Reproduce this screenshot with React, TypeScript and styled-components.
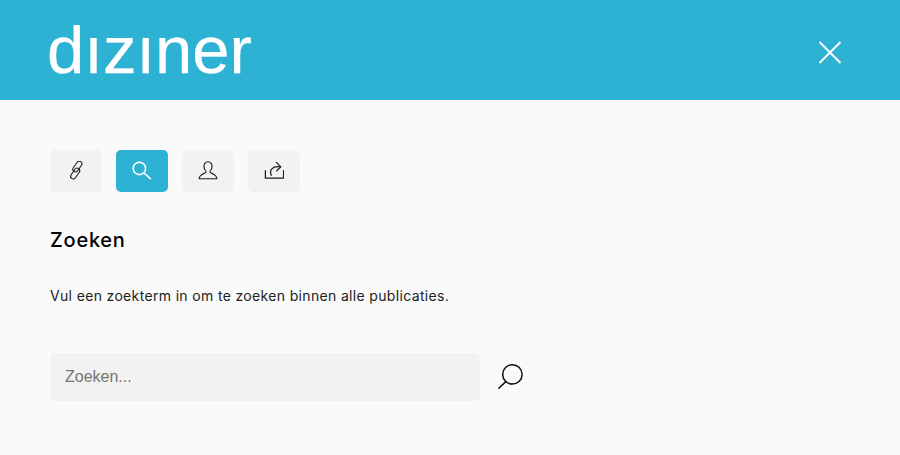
import { ReactNode } from 'react';
import styled, { createGlobalStyle } from 'styled-components';

const Global = createGlobalStyle`
    html, body {
        margin: 0;
        height: 100%;
        background: #fafafa;
    }
`;

const Page = styled.div`
    width: 900px;
    height: 455px;
    overflow: hidden;
    background: #fafafa;
    font-family: Inter, "Liberation Sans", sans-serif;
`;

const Header = styled.header`
    height: 100px;
    background: #2db2d3;
    display: flex;
    align-items: center;
    justify-content: space-between;
    padding: 0 58px 0 50px;
`;

const Logo = styled.div`
    font-family: "Liberation Sans", Arial, sans-serif;
    font-size: 67px;
    line-height: 100px;
    color: #fff;
    -webkit-text-stroke: 0.25px #fff;
    margin-left: -3px;
`;

const CloseButton = styled.button`
    width: 24px;
    height: 24px;
    padding: 0;
    margin-top: 6px;
    border: 0;
    background: none;
    display: block;
`;

const Main = styled.main`
    padding: 50px 50px 0;
`;

const Tabs = styled.nav`
    display: flex;
    gap: 14px;
`;

const Tab = styled.button<{ $active?: boolean }>`
    width: 52px;
    height: 42px;
    padding: 0;
    border: 0;
    border-radius: 5px;
    display: flex;
    align-items: center;
    justify-content: center;
    background: ${(p) => (p.$active ? '#2db2d3' : '#f2f2f2')};
    color: ${(p) => (p.$active ? '#fff' : '#1c1c1c')};
`;

const Title = styled.h2`
    margin: 36px 0 0;
    font-size: 20px;
    line-height: 24px;
    font-weight: 550;
    letter-spacing: 0.75px;
    color: #000;
`;

const Intro = styled.p`
    margin: 34px 0 0;
    font-size: 14px;
    line-height: 20px;
    letter-spacing: 0.34px;
    color: #222;
`;

const SearchRow = styled.form`
    display: flex;
    align-items: center;
    gap: 17px;
    margin-top: 47px;
`;

const SearchInput = styled.input`
    width: 430px;
    height: 48px;
    box-sizing: border-box;
    padding: 0 15px;
    border: 0;
    border-radius: 5px;
    background: #f2f2f2;
    font-family: "Liberation Sans", Arial, sans-serif;
    font-size: 16px;
    color: #222;
    outline: none;

    &::placeholder {
        color: #757575;
        opacity: 1;
    }
`;

const SearchButton = styled.button`
    width: 28px;
    height: 28px;
    padding: 0;
    border: 0;
    background: none;
    color: #111;
    display: block;
`;

function Icon(props: { size?: number; width?: number; children: ReactNode }) {
    const size = props.size ?? 20;
    return (
        <svg width={size} height={size} viewBox="0 0 20 20" fill="none" stroke="currentColor" strokeWidth={props.width ?? 1.1} strokeLinecap="round" strokeLinejoin="round">
            {props.children}
        </svg>
    );
}

export default function App() {
    return (
        <Page>
            <Global />
            <Header>
                <Logo>dızıner</Logo>
                <CloseButton aria-label="Sluiten">
                    <svg width="24" height="24" viewBox="0 0 24 24" fill="none" stroke="#fff" strokeWidth="1.9">
                        <path d="M1.5 1 L22.5 22 M22.5 1 L1.5 22" />
                    </svg>
                </CloseButton>
            </Header>
            <Main>
                <Tabs>
                    <Tab aria-label="Link">
                        <Icon>
                            <rect x="8.8" y="-0.5" width="5.2" height="12" rx="2.6" transform="rotate(35 11.4 5.5)" />
                            <rect x="6.6" y="6.5" width="5.2" height="12" rx="2.6" transform="rotate(35 9.2 12.5)" />
                        </Icon>
                    </Tab>
                    <Tab $active aria-label="Zoeken">
                        <Icon width={1.6}>
                            <circle cx="7.4" cy="7.4" r="6.2" />
                            <path d="M12 12 L18.4 17.6" />
                        </Icon>
                    </Tab>
                    <Tab aria-label="Profiel">
                        <Icon>
                            <path d="M10 0.8 C7.4 0.8 6 2.8 6 5.4 C6 7.8 7.1 9.2 7.8 10 C8.2 10.7 8 11.4 7.2 11.8 C5 12.8 2.4 13.8 1.2 16.8 C1 17.4 1.2 17.8 1.8 17.8 H18.2 C18.8 17.8 19 17.4 18.8 16.8 C17.6 13.8 15 12.8 12.8 11.8 C12 11.4 11.8 10.7 12.2 10 C12.9 9.2 14 7.8 14 5.4 C14 2.8 12.6 0.8 10 0.8 Z" />
                        </Icon>
                    </Tab>
                    <Tab aria-label="Delen">
                        <Icon width={1.25}>
                            <path d="M1.4 9.6 V17 H19.6 V9.6" />
                            <path d="M7.3 14.3 C5 9.3 8 4.8 16.3 5.8" />
                            <path d="M12.4 1.4 L16.8 5.9 L12.7 9.8" />
                        </Icon>
                    </Tab>
                </Tabs>
                <Title>Zoeken</Title>
                <Intro>Vul een zoekterm in om te zoeken binnen alle publicaties.</Intro>
                <SearchRow>
                    <SearchInput placeholder="Zoeken..." />
                    <SearchButton aria-label="Zoeken">
                        <svg width="28" height="28" viewBox="0 0 28 28" fill="none" stroke="currentColor" strokeWidth="1.5" strokeLinecap="round">
                            <circle cx="15.4" cy="11.4" r="9.7" />
                            <path d="M8.8 18.6 L1.8 25.3" />
                        </svg>
                    </SearchButton>
                </SearchRow>
            </Main>
        </Page>
    );
}
